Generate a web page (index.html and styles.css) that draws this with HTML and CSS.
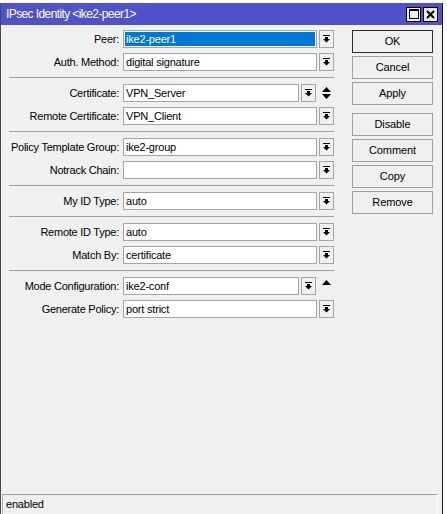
FILE: index.html
```html
<!DOCTYPE html>
<html>
<head>
<meta charset="utf-8">
<link rel="stylesheet" href="styles.css">
</head>
<body>
<div class="window">
  <div class="titlebar">
    <span class="title">IPsec Identity &lt;ike2-peer1&gt;</span>
    <div class="tbtns">
      <span class="tbtn"><svg width="10" height="10" viewBox="0 0 10 10"><rect x="0.5" y="0.5" width="9" height="9" fill="none" stroke="#000"/><rect x="0" y="0" width="10" height="2" fill="#000"/></svg></span>
      <span class="tbtn"><svg width="9" height="9" viewBox="0 0 9 9"><path d="M1 1L8 8M8 1L1 8" stroke="#000" stroke-width="2"/></svg></span>
    </div>
  </div>
  <div class="content">
    <div class="form">
      <div class="group">
        <div class="row"><span class="lbl">Peer:</span><div class="field sel"><span class="hl">ike2-peer1</span></div><span class="dd"><svg width="7" height="8" viewBox="0 0 7 8"><rect x="0" y="0" width="7" height="1"/><rect x="2" y="2" width="3" height="2"/><path d="M0 4H7L3.5 7.5Z"/></svg></span></div>
        <div class="row"><span class="lbl">Auth. Method:</span><div class="field">digital signature</div><span class="dd"><svg width="7" height="8" viewBox="0 0 7 8"><rect x="0" y="0" width="7" height="1"/><rect x="2" y="2" width="3" height="2"/><path d="M0 4H7L3.5 7.5Z"/></svg></span></div>
      </div>
      <div class="sep"></div>
      <div class="group">
        <div class="row"><span class="lbl">Certificate:</span><div class="field">VPN_Server</div><span class="dd"><svg width="7" height="8" viewBox="0 0 7 8"><rect x="0" y="0" width="7" height="1"/><rect x="2" y="2" width="3" height="2"/><path d="M0 4H7L3.5 7.5Z"/></svg></span><span class="extra"><svg width="9" height="13" viewBox="0 0 9 13"><path d="M4.5 0L9 5H0Z M0 7H9L4.5 12Z"/></svg></span></div>
        <div class="row"><span class="lbl">Remote Certificate:</span><div class="field">VPN_Client</div><span class="dd"><svg width="7" height="8" viewBox="0 0 7 8"><rect x="0" y="0" width="7" height="1"/><rect x="2" y="2" width="3" height="2"/><path d="M0 4H7L3.5 7.5Z"/></svg></span></div>
      </div>
      <div class="sep"></div>
      <div class="group">
        <div class="row"><span class="lbl">Policy Template Group:</span><div class="field">ike2-group</div><span class="dd"><svg width="7" height="8" viewBox="0 0 7 8"><rect x="0" y="0" width="7" height="1"/><rect x="2" y="2" width="3" height="2"/><path d="M0 4H7L3.5 7.5Z"/></svg></span></div>
        <div class="row"><span class="lbl">Notrack Chain:</span><div class="field"></div><span class="dd"><svg width="7" height="8" viewBox="0 0 7 8"><rect x="0" y="0" width="7" height="1"/><rect x="2" y="2" width="3" height="2"/><path d="M0 4H7L3.5 7.5Z"/></svg></span></div>
      </div>
      <div class="sep"></div>
      <div class="group">
        <div class="row"><span class="lbl">My ID Type:</span><div class="field">auto</div><span class="dd"><svg width="7" height="8" viewBox="0 0 7 8"><rect x="0" y="0" width="7" height="1"/><rect x="2" y="2" width="3" height="2"/><path d="M0 4H7L3.5 7.5Z"/></svg></span></div>
      </div>
      <div class="sep"></div>
      <div class="group">
        <div class="row"><span class="lbl">Remote ID Type:</span><div class="field">auto</div><span class="dd"><svg width="7" height="8" viewBox="0 0 7 8"><rect x="0" y="0" width="7" height="1"/><rect x="2" y="2" width="3" height="2"/><path d="M0 4H7L3.5 7.5Z"/></svg></span></div>
        <div class="row"><span class="lbl">Match By:</span><div class="field">certificate</div><span class="dd"><svg width="7" height="8" viewBox="0 0 7 8"><rect x="0" y="0" width="7" height="1"/><rect x="2" y="2" width="3" height="2"/><path d="M0 4H7L3.5 7.5Z"/></svg></span></div>
      </div>
      <div class="sep"></div>
      <div class="group">
        <div class="row"><span class="lbl">Mode Configuration:</span><div class="field">ike2-conf</div><span class="dd"><svg width="7" height="8" viewBox="0 0 7 8"><rect x="0" y="0" width="7" height="1"/><rect x="2" y="2" width="3" height="2"/><path d="M0 4H7L3.5 7.5Z"/></svg></span><span class="extra"><svg width="9" height="13" viewBox="0 0 9 13"><path d="M4.5 0L9 5H0Z"/></svg></span></div>
        <div class="row"><span class="lbl">Generate Policy:</span><div class="field">port strict</div><span class="dd"><svg width="7" height="8" viewBox="0 0 7 8"><rect x="0" y="0" width="7" height="1"/><rect x="2" y="2" width="3" height="2"/><path d="M0 4H7L3.5 7.5Z"/></svg></span></div>
      </div>
    </div>
    <div class="buttons">
      <div class="btn default">OK</div>
      <div class="btn">Cancel</div>
      <div class="btn">Apply</div>
      <div class="btn gap">Disable</div>
      <div class="btn">Comment</div>
      <div class="btn">Copy</div>
      <div class="btn">Remove</div>
    </div>
  </div>
  <div class="status">enabled</div>
</div>
</body>
</html>
```
FILE: styles.css
```css
html, body {
  margin: 0;
  padding: 0;
  background: #ffffff;
  width: 447px;
  height: 514px;
  overflow: hidden;
}
.window {
  margin-top: 3px;
  width: 441px;
  height: 511px;
  background: #f0f0f0;
  border-left: 1px solid #4a4a4a;
  border-right: 1px solid #1a1a1a;
  display: flex;
  flex-direction: column;
  font-family: "Liberation Sans", Arial, sans-serif;
  font-size: 11px;
  color: #000;
}
.titlebar {
  height: 22px;
  background: #5052c9;
  color: #fff;
  display: flex;
  align-items: center;
  justify-content: space-between;
  padding-left: 5px;
  padding-right: 4px;
}
.title {
  font-size: 12px;
  letter-spacing: -0.6px;
}
.tbtns {
  display: flex;
  gap: 2px;
}
.tbtn {
  width: 13px;
  height: 13px;
  background: #ececec;
  border: 1px solid #000;
  display: flex;
  align-items: center;
  justify-content: center;
}
.content {
  display: flex;
  padding: 5px 0 0 8px;
}
.form {
  width: 325px;
}
.group {
  display: flex;
  flex-direction: column;
  gap: 5px;
}
.row {
  display: flex;
  align-items: center;
  height: 18px;
}
.lbl {
  width: 110px;
  margin-right: 4px;
  text-align: right;
  white-space: nowrap;
  letter-spacing: -0.25px;
}
.field {
  flex: 1;
  height: 16px;
  background: #fff;
  border: 1px solid #a5a5a5;
  padding-left: 2px;
  line-height: 16px;
  white-space: nowrap;
  overflow: hidden;
  letter-spacing: -0.2px;
}
.field.sel {
  padding: 1px;
  height: 14px;
  line-height: 14px;
}
.hl {
  display: block;
  height: 14px;
  background: #0078d7;
  color: #fff;
  padding-left: 1px;
}
.dd {
  width: 13px;
  height: 16px;
  margin-left: 2px;
  border: 1px solid #a5a5a5;
  background: #f0f0f0;
  display: flex;
  align-items: center;
  justify-content: center;
}
.dd svg {
  fill: #000;
}
.extra {
  width: 18px;
  height: 18px;
  display: flex;
  align-items: center;
  justify-content: center;
  padding-left: 2px;
  box-sizing: border-box;
}
.extra svg {
  fill: #000;
}
.sep {
  height: 1px;
  background: #a0a0a0;
  margin: 6px 0;
}
.buttons {
  margin-left: 18px;
  width: 81px;
  display: flex;
  flex-direction: column;
  gap: 3px;
}
.btn {
  height: 21px;
  border: 1px solid #a0a0a0;
  background: #efefef;
  text-align: center;
  line-height: 21px;
  letter-spacing: -0.1px;
}
.btn.default {
  border-color: #2b2b2b;
}
.btn.gap {
  margin-top: 5px;
}
.status {
  margin-top: auto;
  margin-left: 1px;
  margin-right: 4px;
  height: 19px;
  border-top: 1px solid #a0a0a0;
  border-left: 1px solid #b4b4b4;
  border-right: 1px solid #fafafa;
  line-height: 19px;
  padding-left: 3px;
  letter-spacing: -0.2px;
}
```
